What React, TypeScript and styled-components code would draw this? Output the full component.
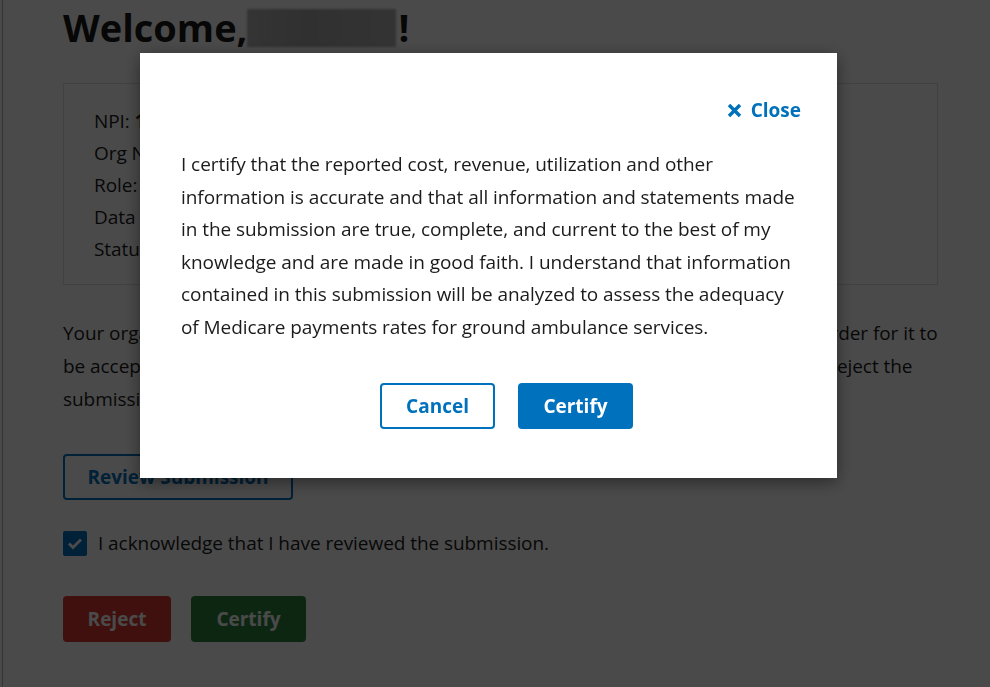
import React, { useState } from 'react'
import styled, { createGlobalStyle } from 'styled-components'

const GlobalStyle = createGlobalStyle`
    html, body {
        margin: 0;
        padding: 0;
        background: #fff;
        font-family: "Open Sans", "Noto Sans", sans-serif;
        color: #1b1b1b;
    }
    * { box-sizing: border-box; }
`;

const Page = styled.div`
    min-height: 687px;
    margin-left: 2px;
    border-left: 1px solid #b8b8b8;
    padding: 0 52px 40px 60px;
`;

const Heading = styled.h1`
    margin: 0;
    padding-top: 4px;
    font-size: 38px;
    line-height: 46px;
    font-weight: 700;
    display: flex;
    align-items: center;
`;

const HiddenName = styled.span`
    display: inline-block;
    width: 149px;
    height: 38px;
    margin: 2px 2px 0 0;
    background: linear-gradient(90deg, #b4b4b4, #a6a6a6 40%, #acacac 70%, #b2b2b2);
    filter: blur(1px);
`;

const InfoBox = styled.div`
    margin-top: 33px;
    border: 1px solid #dfe1e2;
    padding: 21px 30px 20px;
    height: 202px;
`;

const InfoLine = styled.div`
    font-size: 19px;
    line-height: 32px;
    letter-spacing: -0.06px;
`;

const Value = styled.strong`
    font-weight: 700;
`;

const Paragraph = styled.p`
    margin: 32px 0 0;
    font-size: 19px;
    line-height: 33px;
    letter-spacing: -0.06px;
    white-space: nowrap;
`;

const OutlineButton = styled.button<{ $w: number }>`
    font-family: inherit;
    font-size: 19px;
    font-weight: 700;
    height: 46px;
    width: ${(p) => p.$w}px;
    padding: 0;
    border: 2px solid #0071bc;
    border-radius: 4px;
    background: #fff;
    color: #0071bc;
    cursor: pointer;
`;

const ReviewRow = styled.div`
    margin-top: 38px;
`;

const CheckRow = styled.label`
    margin-top: 30px;
    display: flex;
    align-items: center;
    gap: 11px;
    font-size: 19px;
    letter-spacing: -0.06px;
    cursor: pointer;
`;

const CheckBox = styled.span`
    width: 24px;
    height: 25px;
    border-radius: 2px;
    background: #0071bc;
    display: flex;
    align-items: center;
    justify-content: center;
`;

const ActionRow = styled.div`
    margin-top: 40px;
    display: flex;
    gap: 20px;
`;

const SolidButton = styled.button<{ $bg: string; $w: number }>`
    font-family: inherit;
    font-size: 19px;
    font-weight: 700;
    height: 46px;
    width: ${(p) => p.$w}px;
    padding: 0;
    border: none;
    border-radius: 4px;
    background: ${(p) => p.$bg};
    color: #fff;
    cursor: pointer;
`;

const Overlay = styled.div`
    position: fixed;
    inset: 0;
    background: rgba(0, 0, 0, 0.71);
    display: flex;
    align-items: flex-start;
`;

const Modal = styled.div`
    margin: 53px 0 0 140px;
    width: 697px;
    height: 425px;
    background: #fff;
    box-shadow: 0 4px 16px rgba(0, 0, 0, 0.45);
    padding: 40px 36px 0 41px;
`;

const CloseRow = styled.div`
    display: flex;
    justify-content: flex-end;
    height: 34px;
`;

const CloseButton = styled.button`
    display: flex;
    align-items: center;
    gap: 9px;
    border: none;
    background: none;
    padding: 0;
    font-family: inherit;
    font-size: 19px;
    font-weight: 700;
    color: #0071bc;
    cursor: pointer;
`;

const ModalText = styled.p`
    margin: 21px 0 0;
    font-size: 19px;
    line-height: 32.5px;
    letter-spacing: -0.06px;
    white-space: nowrap;
`;

const ModalActions = styled.div`
    margin-top: 40px;
    display: flex;
    gap: 23px;
    padding-left: 199px;
`;

const App: React.FC = () => {
    const [open, setOpen] = useState(true);

    return (
        <>
            <GlobalStyle />
            <Page>
                <Heading>
                    Welcome,<HiddenName />!
                </Heading>
                <InfoBox>
                    <InfoLine>NPI: <Value>1234567890</Value></InfoLine>
                    <InfoLine>Org Name: <Value>Ground Ambulance Services</Value></InfoLine>
                    <InfoLine>Role: <Value>Certifier</Value></InfoLine>
                    <InfoLine>Data Collection Period: <Value>2022</Value></InfoLine>
                    <InfoLine>Status: <Value>Submitted</Value></InfoLine>
                </InfoBox>
                <Paragraph>
                    Your organization's submission is ready for certification. Please review and certify it in order for it to
                    <br />
                    be accepted. Please review the submission closely and either certify or, if it is incorrect, reject the
                    <br />
                    submission and return it to your organization.
                </Paragraph>
                <ReviewRow>
                    <OutlineButton $w={230}>Review Submission</OutlineButton>
                </ReviewRow>
                <CheckRow>
                    <CheckBox>
                        <svg width="16" height="13" viewBox="0 0 16 13">
                            <path d="M2 6.5 L6 10.5 L14 2.5" fill="none" stroke="#fff" strokeWidth="3" />
                        </svg>
                    </CheckBox>
                    I acknowledge that I have reviewed the submission.
                </CheckRow>
                <ActionRow>
                    <SolidButton $bg="#d83933" $w={108}>Reject</SolidButton>
                    <SolidButton $bg="#2e8540" $w={115}>Certify</SolidButton>
                </ActionRow>
            </Page>
            {open && (
                <Overlay>
                    <Modal>
                        <CloseRow>
                            <CloseButton onClick={() => setOpen(false)}>
                                <svg width="15" height="15" viewBox="0 0 15 15">
                                    <path d="M2 2 L13 13 M13 2 L2 13" stroke="#0071bc" strokeWidth="3.4" />
                                </svg>
                                Close
                            </CloseButton>
                        </CloseRow>
                        <ModalText>
                            I certify that the reported cost, revenue, utilization and other
                            <br />
                            information is accurate and that all information and statements made
                            <br />
                            in the submission are true, complete, and current to the best of my
                            <br />
                            knowledge and are made in good faith. I understand that information
                            <br />
                            contained in this submission will be analyzed to assess the adequacy
                            <br />
                            of Medicare payments rates for ground ambulance services.
                        </ModalText>
                        <ModalActions>
                            <OutlineButton $w={115}>Cancel</OutlineButton>
                            <SolidButton $bg="#0071bc" $w={115}>Certify</SolidButton>
                        </ModalActions>
                    </Modal>
                </Overlay>
            )}
        </>
    )
}

export default App
